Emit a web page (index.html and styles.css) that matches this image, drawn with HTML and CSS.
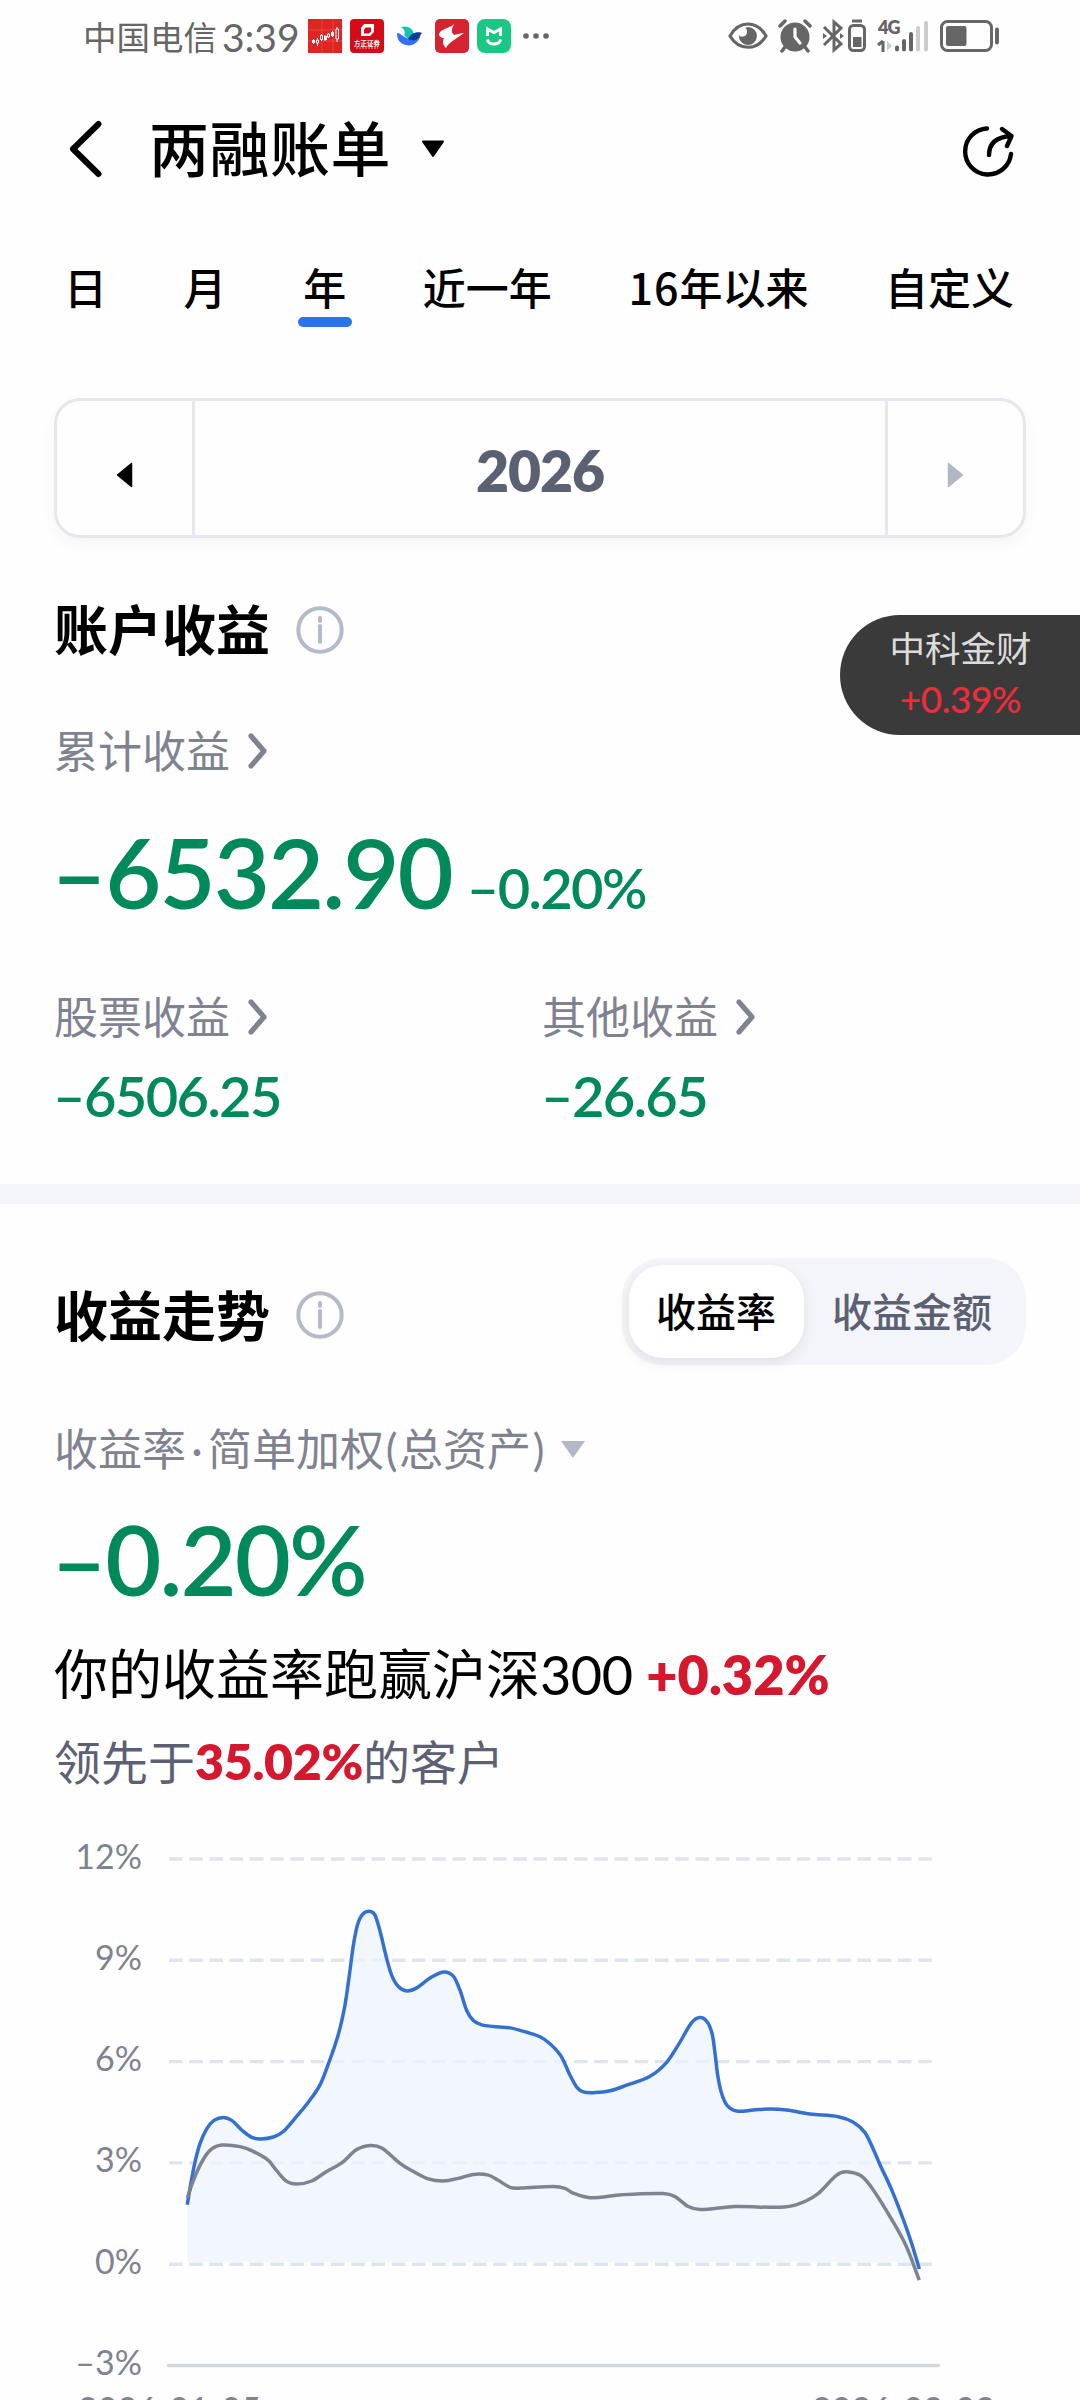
FILE: index.html
```html
<!DOCTYPE html>
<html lang="zh-CN">
<head>
    <meta charset="UTF-8">
    <meta name="viewport" content="width=device-width, initial-scale=1.0">
    <title>两融账单</title>
    <link rel="stylesheet" href="styles.css">
</head>
<body>
    <div class="page">
        <div class="status-bar">
            <span class="carrier">中国电信</span>
            <span class="clock">3:39</span>
            <div class="app-icons">
                <svg width="34" height="34" viewBox="0 0 34 34">
                    <rect width="34" height="34" fill="#e02424"/>
                    <path d="M0 11h34M0 22h34M14 0v34M25 0v34" stroke="#ea5050" stroke-width=".7"/>
                    <path d="M5.500 20v5M9.500 19v8M13.500 15v7M17 16v6M20.500 14v5M24.500 12v6M29 8v15" stroke="#fff" stroke-width="1"/>
                    <path d="M4 21h3v3H4zM16 17h3v4h-3zM23 13h3v4h-3z" fill="#fff"/>
                    <path d="M8.500 21h2v3h-2zM12.500 16.500h2v4h-2zM19.500 15h2v3h-2zM28 10h2.500v10H28z" fill="#e02424" stroke="#fff" stroke-width="1"/>
                </svg>
                <svg width="34" height="34" viewBox="0 0 34 34">
                    <rect width="34" height="34" rx="4" fill="#d60a18"/>
                    <path d="M14 5h10v8l-4 4H11V9z" fill="#fff"/>
                    <path d="M15.500 8.500h5.500v4l-2 2h-5v-4z" fill="#d60a18"/>
                    <text x="17" y="27" text-anchor="middle" class="icon-text">方正证券</text>
                    <path d="M6 29h22" stroke="#f3a0a5" stroke-width="1" stroke-dasharray="2 1"/>
                </svg>
                <svg class="swan" width="26" height="20" viewBox="0 0 26 20">
                    <path d="M4 1c6-2 12 1 13 7l-6 5-4-4c2-3 0-6-3-8z" fill="#16c3b0"/>
                    <path d="M0 7c4 0 7 5 13 6l8-6c2-1 3 0 4 0-2 1-1 3-3 6-3 6-10 8-16 5-4-2-6-5-6-11z" fill="#3370ff"/>
                    <path d="M11 13c3-5 8-8 14-6-2 1-2 3-3 5-3 3-7 3-11 1z" fill="#133c9a"/>
                </svg>
                <svg width="34" height="34" viewBox="0 0 34 34">
                    <rect width="34" height="34" rx="5" fill="#d7232f"/>
                    <path d="M20 4C17 9 6 9 4 15c0 3 3 4 5 4-2 4-1 7 2 10 1-3 4-5 8-8l10-7c-3 0-6 1-10 2-3-3-3-6 1-12z" fill="#fff"/>
                </svg>
                <svg width="34" height="34" viewBox="0 0 34 34">
                    <rect width="34" height="34" rx="8" fill="#1ac885"/>
                    <path d="M10.500 17V10l6.500 3.500L23.500 10v7M10.500 20.500c1 6 12 6 13 0" fill="none" stroke="#fff" stroke-width="3"/>
                </svg>
                <svg class="more" width="28" height="8" viewBox="0 0 28 8">
                    <circle cx="4" cy="4" r="2.800"/><circle cx="14" cy="4" r="2.800"/><circle cx="24" cy="4" r="2.800"/>
                </svg>
            </div>
            <div class="system-icons">
                <svg width="40" height="34" viewBox="0 0 40 34">
                    <path d="M2 17C11 1 29 1 38 17 29 32 11 32 2 17z" fill="none" stroke="#666" stroke-width="3.200"/>
                    <path d="M20 8a9 9 0 1 1-9 8c2 3 8 2 8-3 0-2 0-3-2-4z" fill="#666"/>
                </svg>
                <svg width="34" height="34" viewBox="0 0 34 34">
                    <circle cx="17" cy="18" r="14.500" fill="#666"/>
                    <path d="M2 7l5-5M27 2l5 5M7 28l-3 4M27 28l3 4" stroke="#666" stroke-width="3.500" stroke-linecap="round"/>
                    <path d="M17 10v8l5 6" fill="none" stroke="#fff" stroke-width="3.200" stroke-linecap="round"/>
                </svg>
                <svg class="bluetooth" width="44" height="34" viewBox="0 0 44 34">
                    <path d="M2 8l17 17-7 6V3l7 6L2 26" fill="none" stroke="#666" stroke-width="3"/>
                    <path d="M1 14l4 3-4 3zM18 14l4 3-4 3z" fill="#666"/>
                    <rect x="27.500" y="6.500" width="15" height="25" rx="4" fill="none" stroke="#666" stroke-width="3"/>
                    <path d="M30 2h10" stroke="#666" stroke-width="3"/>
                    <rect x="31" y="18" width="8.500" height="10" fill="#666"/>
                </svg>
                <svg class="signal" width="52" height="34" viewBox="0 0 52 34">
                    <text x="1" y="15" class="net-text">4G</text>
                    <path d="M6 22v11M6 22l-5 4" stroke="#666" stroke-width="3"/>
                    <path d="M10 22l5 5-5 5z" fill="#ccc"/>
                    <path d="M20 28.500v2M27 22v8.500M34 15v15.500" stroke="#666" stroke-width="4" stroke-linecap="round"/>
                    <path d="M41 9v21.500M49 4v26.500" stroke="#ccc" stroke-width="4" stroke-linecap="round"/>
                </svg>
                <svg class="battery" width="60" height="34" viewBox="0 0 60 34">
                    <rect x="1.500" y="2.500" width="50" height="29" rx="6" fill="none" stroke="#666" stroke-width="3"/>
                    <rect x="6" y="7" width="20.500" height="20" rx="2" fill="#666"/>
                    <path d="M57 10.500v13" stroke="#666" stroke-width="4" stroke-linecap="round"/>
                </svg>
            </div>
        </div>

        <div class="header">
            <svg class="back" width="34" height="58" viewBox="0 0 34 58">
                <path d="M29.500 4L4 29l25.500 25" fill="none" stroke="#000" stroke-width="6" stroke-linecap="round" stroke-linejoin="round"/>
            </svg>
            <h1>两融账单</h1>
            <svg class="caret" width="24" height="18" viewBox="0 0 24 18">
                <path d="M2 1.500h20L12 16z" stroke="#000" stroke-width="2" stroke-linejoin="round"/>
            </svg>
            <svg class="share" width="54" height="52" viewBox="0 0 54 52">
                <path d="M26 3.500A23 23 0 1 0 50 29M28 30c0-11 6-18 22-19M41 4l9.500 7-4.500 10" fill="none" stroke="#000" stroke-width="4.400" stroke-linecap="round" stroke-linejoin="round"/>
            </svg>
        </div>

        <div class="tabs">
            <div class="tab">日</div>
            <div class="tab">月</div>
            <div class="tab active">年</div>
            <div class="tab">近一年</div>
            <div class="tab"><span class="num">16</span>年以来</div>
            <div class="tab">自定义</div>
        </div>

        <div class="date-picker">
            <div class="picker-btn">
                <svg width="17" height="26" viewBox="0 0 17 26">
                    <path d="M15.500 1.500v23L1.500 13z" stroke="#000" stroke-width="1.500" stroke-linejoin="round"/>
                </svg>
            </div>
            <div class="picker-value">2026</div>
            <div class="picker-btn">
                <svg width="17" height="26" viewBox="0 0 17 26">
                    <path d="M1.500 1.500v23L15.500 13z" fill="#b2b7c6" stroke="#b2b7c6" stroke-width="1.500" stroke-linejoin="round"/>
                </svg>
            </div>
        </div>

        <div class="section-title account-title">
            <h2>账户收益</h2>
            <svg class="info" width="48" height="48" viewBox="0 0 48 48">
                <circle cx="24" cy="24" r="21.700"/><path d="M24 12v3M24 20v16"/>
            </svg>
        </div>

        <div class="label total-label">累计收益
            <svg class="chevron" width="20" height="38" viewBox="0 0 20 38"><path d="M3 4l13 15L3 34"/></svg>
        </div>
        <div class="total">
            <span class="big-number">–6532.90</span>
            <span class="mid-number">–0.20%</span>
        </div>

        <div class="breakdown">
            <div>
                <div class="label">股票收益
                    <svg class="chevron" width="20" height="38" viewBox="0 0 20 38"><path d="M3 4l13 15L3 34"/></svg>
                </div>
                <div class="mid-number value">–6506.25</div>
            </div>
            <div>
                <div class="label">其他收益
                    <svg class="chevron" width="20" height="38" viewBox="0 0 20 38"><path d="M3 4l13 15L3 34"/></svg>
                </div>
                <div class="mid-number value">–26.65</div>
            </div>
        </div>

        <div class="divider"></div>

        <div class="trend-head">
            <div class="section-title">
                <h2>收益走势</h2>
                <svg class="info" width="48" height="48" viewBox="0 0 48 48">
                    <circle cx="24" cy="24" r="21.700"/><path d="M24 12v3M24 20v16"/>
                </svg>
            </div>
            <div class="switch">
                <div class="switch-item selected">收益率</div>
                <div class="switch-item">收益金额</div>
            </div>
        </div>

        <div class="label metric">收益率<span class="dot">·</span>简单加权<span class="paren">(</span>总资产<span class="paren">)</span>
            <svg class="metric-caret" width="24" height="17" viewBox="0 0 24 17"><path d="M0 0h24L12 17z"/></svg>
        </div>
        <div class="big-number rate">–0.20%</div>
        <div class="compare">你的收益率跑赢沪深<span class="index-num">300</span> <b>+0.32%</b></div>
        <div class="rank">领先于<b>35.02%</b>的客户</div>

        <svg class="chart" id="chart" width="1080" height="581" viewBox="0 0 1080 581">
            <g id="grid"></g>
            <path id="area" class="area"/>
            <path id="mine" class="line mine"/>
            <path id="index" class="line index"/>
            <text x="78" y="602">2026-01-05</text>
            <text x="995" y="602" class="end">2026-02-02</text>
        </svg>

        <div class="stock-float">
            <div class="stock-name">中科金财</div>
            <div class="stock-change">+0.39%</div>
        </div>
    </div>

    <script>
        const mine = [
            [187.3,384.7],[190.7,364.4],[195,342.2],[200,323.7],[206.7,308.9],[214,300.4],[223.3,297.4],[231.7,300.4],
            [241.7,310],[251.7,317.4],[260.7,318.9],[273.3,317],[283.3,311.5],[297,295.9],[308.3,282.2],[320,264.9],
            [328.3,244.1],[338.3,214.5],[345,185],[349.3,155.4],[353.3,125.8],[357.3,105.4],[362.7,94.3],[370.3,91.4],
            [375,95.1],[380,111],[386.7,138.7],[391.7,155.4],[398.3,166.5],[407,170.9],[416.7,167.9],[430,158],
            [443.7,152],[453.3,156.1],[460,170.2],[466.7,190.5],[473.3,200.5],[481.7,204.9],[493.3,206.4],[510,207.9],
            [526.7,212.3],[540,216.8],[550,223.8],[560,234.5],[565,244.1],[570,255.2],[576.7,267.1],[583.3,271.9],
            [595,272.6],[610,270.8],[626.7,265.2],[650,256.3],[666.7,242.3],[678.3,224.9],[691.7,202.7],[700,197.5],
            [707.3,202],[712.3,214.5],[715,233],[717.7,255.2],[721.7,273.7],[727.3,285.6],[736.7,291.1],[753.3,290],
            [770,288.9],[786.7,290],[810,294.1],[838.3,296.7],[853.3,302.2],[865,312.6],[873.3,329.2],[880,344.7],
            [891.7,369.9],[903.3,399.5],[911.7,423.5],[919.3,449]
        ];
        const index = [
            [187.3,378],[193.3,360.7],[201.7,342.2],[210,330.3],[221.7,325.1],[240,326.6],[251.7,330.7],[268.3,340.3],
            [276.7,350.7],[286.7,361.4],[297,364],[311.7,361],[326.7,351.4],[341.7,342.9],[356.7,329.6],[370.3,325.5],
            [381.7,328.1],[400,343.3],[413.3,351.4],[428.3,358.8],[443.3,361],[458.3,358.4],[473.3,354.4],[488.3,355.1],
            [498.3,360.3],[510,367.3],[520,368.1],[553.3,366.4],[565,368.4],[573.3,373.2],[590,377.7],[621.7,374.7],
            [663.3,373.6],[675,376.6],[688.3,386.5],[700,389.5],[735,386.5],[780,387.3],[796.7,384.7],[816.7,374.7],
            [836.7,355.1],[846.3,351.8],[861.7,356.2],[873.3,369.9],[891.7,399.5],[906.7,427.2],[919.3,460.2]
        ];

        // smooth line through all points
        function smooth(pts) {
            let d = 'M' + pts[0];
            for (let i = 0; i < pts.length - 1; i++) {
                const p0 = pts[i - 1] || pts[i];
                const p1 = pts[i];
                const p2 = pts[i + 1];
                const p3 = pts[i + 2] || p2;
                const h = (p2[0] - p1[0]) / 3;
                const m1 = (p2[1] - p0[1]) / (p2[0] - p0[0]);
                const m2 = (p3[1] - p1[1]) / (p3[0] - p1[0]);
                d += `C${p1[0] + h},${p1[1] + m1 * h} ${p2[0] - h},${p2[1] - m2 * h} ${p2}`;
            }
            return d;
        }

        const minePath = smooth(mine);
        document.getElementById('mine').setAttribute('d', minePath);
        document.getElementById('index').setAttribute('d', smooth(index));
        document.getElementById('area').setAttribute('d', minePath + 'L915,442H187.3Z');

        let grid = '';
        ['12%', '9%', '6%', '3%', '0%', '–3%'].forEach(function(label, i) {
            const y = 39 + i * 101.3;
            const last = i === 5;
            grid += `<text class="end" x="142" y="${y + 9.5}">${label}</text>`;
            grid += `<line class="${last ? 'axis' : 'dash'}" x1="${last ? 168.5 : 169}" x2="${last ? 938.5 : 932}" y1="${y}" y2="${y}"/>`;
        });
        document.getElementById('grid').innerHTML = grid;
    </script>
</body>
</html>
```
FILE: styles.css
```css
* {
    box-sizing: border-box;
}
body {
    margin: 0;
    background: #fefefe;
    font-family: Lato, "Noto Sans CJK SC", sans-serif;
    color: #000;
}
h1, h2 {
    margin: 0;
}
svg {
    display: block;
    flex-shrink: 0;
}
.page {
    position: relative;
    width: 1080px;
    height: 2400px;
    overflow: hidden;
}

/* status bar */
.status-bar {
    display: flex;
    align-items: center;
    height: 72px;
    padding-left: 83px;
    color: #666;
}
.carrier {
    width: 137px;
    font-size: 33.5px;
    line-height: 40px;
    white-space: nowrap;
    padding-top: 2px;
}
.clock {
    width: 88px;
    padding-left: 2px;
    font-size: 39px;
    line-height: 40px;
    padding-top: 2px;
}
.app-icons {
    display: flex;
    align-items: center;
    gap: 8px;
}
.swan {
    margin: 0 4px 0 5px;
}
.more {
    margin-left: 3px;
    fill: #666;
}
.icon-text {
    font-size: 6.5px;
    font-weight: 700;
    fill: #fff;
}
.system-icons {
    display: flex;
    align-items: center;
    margin-left: 178px;
    gap: 10px;
}
.bluetooth {
    margin-right: 1px;
}
.signal {
    overflow: visible;
}
.net-text {
    font-size: 18px;
    font-weight: 800;
    letter-spacing: -1px;
    fill: #666;
}
.battery {
    margin-left: 1px;
}

/* header */
.header {
    display: flex;
    align-items: center;
    height: 154px;
    padding: 0 65px 0 69px;
}
.header h1 {
    margin-left: 46px;
    font-size: 60px;
    font-weight: 500;
    line-height: 70px;
    letter-spacing: .5px;
}
.caret {
    margin-left: 30px;
}
.share {
    margin: 3px 0 0 auto;
}

/* period tabs */
.tabs {
    display: flex;
    justify-content: space-between;
    height: 100px;
    padding: 38px 66px 0 64px;
    font-size: 43px;
    font-weight: 500;
    line-height: 50px;
}
.tab.active::after {
    content: "";
    display: block;
    width: 54px;
    height: 10px;
    margin: 3px -5.5px 0;
    border-radius: 5px;
    background: #2b73ee;
}
.tab .num {
    font-family: "Noto Sans CJK SC", sans-serif;
    line-height: 1;
    letter-spacing: 1px;
}

/* date picker */
.date-picker {
    display: flex;
    height: 140px;
    margin: 72px 54px 0;
    border: 3px solid #e6e7ec;
    border-radius: 26px;
    box-shadow: 0 6px 14px rgba(60, 80, 120, .05);
}
.picker-btn {
    display: flex;
    align-items: center;
    justify-content: center;
    width: 135px;
    padding-top: 14px;
}
.picker-value {
    flex: 1;
    border: solid #e6e7ec;
    border-width: 0 3px;
    color: #5b6072;
    font-size: 57px;
    font-weight: 800;
    line-height: 138px;
    letter-spacing: -1px;
    text-align: center;
}

/* titles and labels */
.section-title {
    display: flex;
    align-items: center;
    height: 60px;
}
.section-title h2 {
    width: 242px;
    font-size: 54px;
    font-weight: 700;
    line-height: 62px;
}
.account-title {
    margin: 63px 54px 0;
}
.info {
    margin-top: -3px;
    fill: none;
    stroke: #b5bac9;
    stroke-width: 4;
    stroke-linecap: round;
}
.label {
    display: flex;
    align-items: center;
    height: 50px;
    color: #7f8391;
    font-size: 44px;
    line-height: 50px;
    white-space: nowrap;
}
.chevron {
    margin-left: 18px;
    fill: none;
    stroke: #7f8391;
    stroke-width: 5.2;
    stroke-linecap: round;
    stroke-linejoin: round;
}

/* account profit */
.total-label {
    margin: 65px 54px 0;
}
.total {
    display: flex;
    align-items: baseline;
    height: 100px;
    margin: 45px 54px 0;
}
.big-number {
    margin-left: -3px;
    color: #008a5c;
    font-size: 97px;
    font-weight: 600;
    line-height: 102px;
    letter-spacing: -2px;
}
.mid-number {
    color: #008a5c;
    font-size: 56px;
    font-weight: 600;
    line-height: 60px;
    letter-spacing: -1.6px;
}
.total .mid-number {
    margin-left: 15px;
}
.breakdown {
    display: grid;
    grid-template-columns: 488px 1fr;
    margin: 71px 54px 0;
}
.value {
    margin: 24px 0 -1px -1px;
}
.divider {
    height: 20px;
    margin-top: 59px;
    background: #f4f5fa;
}

/* profit trend */
.trend-head {
    display: flex;
    align-items: center;
    justify-content: space-between;
    margin: 54px 54px 0;
}
.trend-head .section-title {
    padding-top: 10px;
}
.switch {
    display: flex;
    height: 107px;
    padding: 7px 0 7px 7px;
    border-radius: 40px;
    background: #f4f5fa;
}
.switch-item {
    padding: 0 28px;
    width: 222px;
    color: #5b6072;
    font-size: 40px;
    font-weight: 500;
    line-height: 94px;
    white-space: nowrap;
}
.switch-item.selected {
    width: 175px;
    padding-left: 27px;
    border-radius: 34px;
    background: #fff;
    color: #000;
    box-shadow: 0 4px 14px rgba(0, 0, 0, .09);
}
.metric {
    margin: 59px 54px 0;
}
.metric .dot {
    width: 22px;
    text-align: center;
}
.metric .paren {
    width: 15px;
    text-align: center;
}
.metric-caret {
    margin-left: 15px;
    fill: #b3b8c7;
}
.rate {
    margin: 34px 51px 0;
    height: 100px;
}
.compare {
    margin: 37px 54px 0;
    font-size: 54px;
    line-height: 60px;
}
.index-num {
    letter-spacing: -.5px;
}
.compare b, .rank b {
    color: #d6182f;
    font-weight: 800;
}
.rank {
    margin: 26px 54px 0;
    color: #5b6072;
    font-size: 47px;
    line-height: 60px;
}
.rank b {
    font-size: 50px;
    letter-spacing: -.3px;
}

/* chart */
.chart {
    margin-top: 28px;
}
.chart text {
    fill: #7f8391;
    font-size: 34px;
}
.chart .end {
    text-anchor: end;
}
.dash {
    stroke: #dfe4ee;
    stroke-width: 3.4;
    stroke-dasharray: 13.5 6.75;
}
.axis {
    stroke: #d2d8e0;
    stroke-width: 3.5;
    stroke-linecap: round;
}
.area {
    fill: #eef4fc;
    fill-opacity: .75;
}
.line {
    fill: none;
    stroke-width: 3.5;
}
.mine {
    stroke: #3370cf;
}
.index {
    stroke: #7f8391;
}

/* floating quote, sits over the page at the right edge */
.stock-float {
    position: absolute;
    top: 615px;
    right: 0;
    width: 240px;
    height: 120px;
    padding: 9px 0 0 1px;
    border-radius: 60px 0 0 60px;
    background: #3a3a3a;
    text-align: center;
}
.stock-name {
    color: #dcdcdc;
    font-size: 35.5px;
    line-height: 50px;
}
.stock-change {
    color: #ee2c3c;
    font-size: 37px;
    font-weight: 500;
    line-height: 50px;
    letter-spacing: -.5px;
}
```
